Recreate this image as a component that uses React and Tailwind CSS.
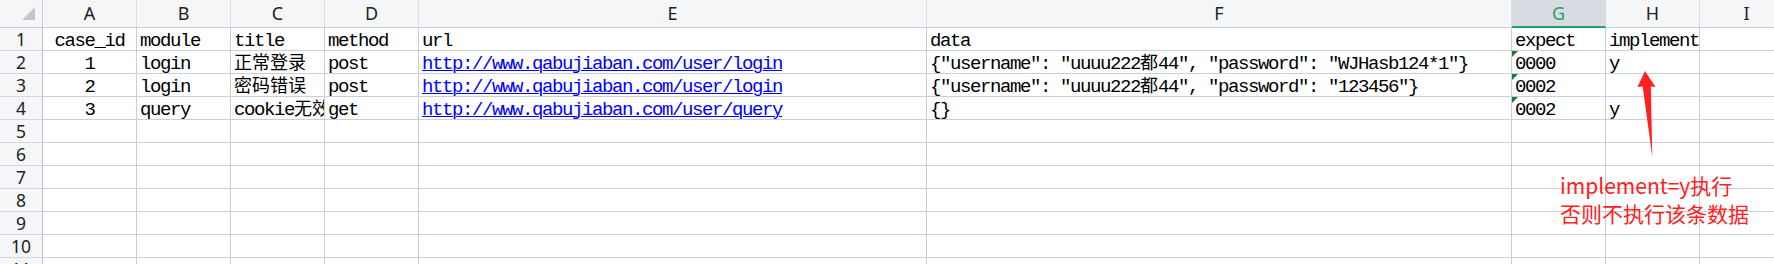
import React from 'react';

const columns = [
  { key: 'A', w: 'w-[94px]', center: true },
  { key: 'B', w: 'w-[94px]' },
  { key: 'C', w: 'w-[94px]' },
  { key: 'D', w: 'w-[94px]' },
  { key: 'E', w: 'w-[508px]' },
  { key: 'F', w: 'w-[585px]' },
  { key: 'G', w: 'w-[94px]', active: true },
  { key: 'H', w: 'w-[94px]' },
  { key: 'I', w: 'w-[94px]' },
];

const rows = [
  ['case_id', 'module', 'title', 'method', 'url', 'data', 'expect', 'implement', ''],
  ['1', 'login', '正常登录', 'post', 'http://www.qabujiaban.com/user/login', '{"username": "uuuu222都44", "password": "WJHasb124*1"}', '0000', 'y', ''],
  ['2', 'login', '密码错误', 'post', 'http://www.qabujiaban.com/user/login', '{"username": "uuuu222都44", "password": "123456"}', '0002', '', ''],
  ['3', 'query', 'cookie无效', 'get', 'http://www.qabujiaban.com/user/query', '{}', '0002', 'y', ''],
];

// split mixed text so the Chinese runs get a CJK font
const CellText = ({ text }) => {
  const parts = text.split(/([\u4e00-\u9fff]+)/);
  return (
    <>
      {parts.map((p, i) =>
        /[\u4e00-\u9fff]/.test(p) ? (
          <span key={i} className="font-[Noto_Sans_CJK_SC,sans-serif] text-[18px] leading-[18px] tracking-normal">
            {p}
          </span>
        ) : (
          <span key={i}>{p}</span>
        )
      )}
    </>
  );
};

const Corner = () => (
  <div className="relative w-[43px] h-[28px] shrink-0 bg-[#f5f6f8] border-r border-b border-[#c9cedb]">
    <svg className="absolute left-[22px] top-[7px]" width="14" height="14" viewBox="0 0 14 14">
      <polygon points="13,0 13,13 0,13" fill="#c3c5c9" />
    </svg>
  </div>
);

const HeaderRow = () => (
  <div className="flex">
    <Corner />
    {columns.map((c) => (
      <div
        key={c.key}
        className={`${c.w} h-[28px] shrink-0 flex items-center justify-center text-[18px] font-[Noto_Sans,sans-serif] ${
          c.active
            ? 'bg-[#d8dbe1] text-[#21a366] border-b-2 border-[#21a366] border-r border-r-[#d5d9e2]'
            : 'bg-[#f5f6f8] text-[#222] border-r border-b border-r-[#dcdfe6] border-b-[#c9cedb]'
        }`}
      >
        {c.key}
      </div>
    ))}
  </div>
);

const DataRow = ({ n, cells }) => (
  <div className="flex">
    <div className="w-[43px] h-[23px] shrink-0 flex items-center justify-center pt-[1px] bg-[#f5f6f8] border-r border-r-[#b9c0d2] border-b border-b-[#d3d7e0] text-[17.5px] text-[#222] font-[Noto_Sans,sans-serif]">
      {n}
    </div>
    {columns.map((c, i) => {
      const v = cells ? cells[i] : '';
      const isLink = c.key === 'E' && n > 1 && v;
      const marker = c.key === 'G' && n > 1 && n < 5;
      return (
        <div
          key={c.key}
          className={`${c.w} relative h-[23px] shrink-0 overflow-hidden whitespace-nowrap flex items-end border-r border-b border-[#c9cedb] bg-white font-[Liberation_Mono,monospace] text-[19px] tracking-[-1.4px] text-black leading-[18px] ${
            c.center ? 'justify-center' : 'pl-[3px]'
          }`}
        >
          {marker && (
            <svg className="absolute left-0 top-0" width="6" height="6" viewBox="0 0 6 6">
              <polygon points="0,0 6,0 0,6" fill="#127a3a" />
            </svg>
          )}
          <div>
            {isLink ? (
              <span className="text-[#0000ff] underline underline-offset-[1px] decoration-1">{v}</span>
            ) : (
              <CellText text={v} />
            )}
          </div>
        </div>
      );
    })}
  </div>
);

export default function App() {
  const blank = [5, 6, 7, 8, 9, 10, 11];
  return (
    <div className="relative w-[1774px] h-[264px] overflow-hidden bg-white">
      <HeaderRow />
      {rows.map((r, i) => (
        <DataRow key={i} n={i + 1} cells={r} />
      ))}
      {blank.map((n) => (
        <DataRow key={n} n={n} />
      ))}

      {/* annotation arrow */}
      <svg className="absolute left-[1630px] top-[65px]" width="35" height="100" viewBox="0 0 35 100">
        <polygon points="15,6 25.5,22 20.8,21.5 22.3,92 12.7,21.5 7.5,22" fill="#ff2020" />
      </svg>
      <div className="absolute left-[1560px] top-[171px] text-[21px] leading-[28px] text-[#ff2020] font-[Noto_Sans_CJK_SC,sans-serif] whitespace-nowrap">
        <div>implement=y执行</div>
        <div>否则不执行该条数据</div>
      </div>
    </div>
  );
}
